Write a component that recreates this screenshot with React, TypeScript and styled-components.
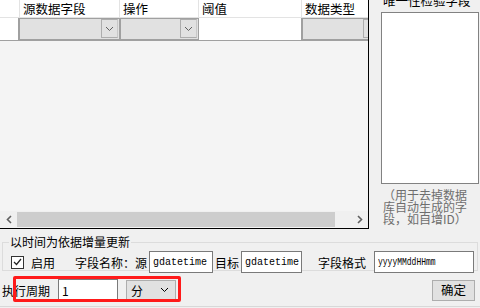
import React from 'react';
import styled, { createGlobalStyle } from 'styled-components';

const GlobalStyle = createGlobalStyle`
  html, body {
    margin: 0;
    padding: 0;
    background: #f0f0f0;
  }
  body {
    font-family: "Noto Sans CJK SC", "Microsoft YaHei", sans-serif;
    font-size: 12px;
    color: #000;
  }
`;

const Window = styled.div`
  width: 480px;
  height: 308px;
  overflow: hidden;
  display: flex;
  flex-direction: column;
  background: #f0f0f0;
`;

const Top = styled.div`
  display: flex;
  height: 229px;
`;

const GridPane = styled.div`
  width: 368px;
  border-right: 1px solid #000;
  border-bottom: 1px solid #000;
  background: #f4f4f4;
  display: flex;
  flex-direction: column;
  overflow: hidden;
`;

const Row = styled.div<{ $height: number }>`
  display: flex;
  height: ${({ $height }) => $height}px;
  flex-shrink: 0;
`;

const HeadCell = styled.div<{ $width: number }>`
  width: ${({ $width }) => $width}px;
  flex-shrink: 0;
  box-sizing: border-box;
  background: #fff;
  border-right: 1px solid #e3e3e3;
  border-bottom: 1px solid #e3e3e3;
  padding-left: 3px;
  font-size: 12.5px;
  line-height: 17px;
  white-space: nowrap;
`;

const RowHeader = styled.div`
  width: 19px;
  flex-shrink: 0;
  box-sizing: border-box;
  background: #fff;
  border-right: 1px solid #a0a0a0;
  border-bottom: 1px solid #a0a0a0;
`;

const ComboCell = styled.div<{ $width: number }>`
  width: ${({ $width }) => $width}px;
  flex-shrink: 0;
  box-sizing: border-box;
  background: #e1e1e1;
  border: 1px solid #a0a0a0;
  border-width: 1px 1px 2px 1px;
  display: flex;
  justify-content: flex-end;
  padding: 0 1px 1px 0;
`;

const DropButton = styled.div`
  width: 17px;
  box-sizing: border-box;
  border: 1px solid #adadad;
  border-right-color: #c8c8c8;
  display: flex;
  align-items: center;
  justify-content: center;
  color: #606060;
`;

const TextCell = styled.div<{ $width: number }>`
  width: ${({ $width }) => $width}px;
  flex-shrink: 0;
  box-sizing: border-box;
  background: #fff;
  border-bottom: 1px solid #a0a0a0;
  border-right: 1px solid #a0a0a0;
`;

const GridSpace = styled.div`
  flex: 1;
`;

const HScroll = styled.div`
  height: 16px;
  background: #f0f0f0;
  display: flex;
  align-items: center;
  margin-bottom: 1px;
`;

const ScrollArrow = styled.div`
  width: 17px;
  height: 16px;
  display: flex;
  align-items: center;
  justify-content: center;
  color: #606060;
`;

const ScrollThumb = styled.div`
  flex: 1;
  height: 15px;
  background: #cdcdcd;
  margin-right: 16px;
`;

const SidePane = styled.div`
  flex: 1;
  padding: 0 1px 0 12px;
  display: flex;
  flex-direction: column;
`;

const SideTitle = styled.div`
  margin-top: -6px;
  height: 18px;
  line-height: 14px;
  padding-left: 2px;
  font-size: 12.5px;
`;

const ListBox = styled.div`
  height: 172px;
  background: #fff;
  border: 1px solid #828282;
  box-sizing: border-box;
`;

const Hint = styled.div`
  width: 86px;
  margin-top: 5px;
  padding-left: 2px;
  color: #6e6e6e;
  font-size: 12px;
  line-height: 12px;
  font-family: "Noto Sans CJK SC", "DejaVu Sans", sans-serif;
`;

const Group = styled.fieldset`
  margin: 6px 2px 0 2px;
  padding: 2px 0 4px 0;
  height: 36px;
  box-sizing: border-box;
  border: 1px solid #dcdcdc;
  display: flex;
  align-items: center;
  font-size: 12px;
  legend {
    padding: 0 1px;
    margin-left: 6px;
    line-height: 14px;
    font-size: 12px;
  }
`;

const Check = styled.span`
  width: 11px;
  height: 11px;
  border: 1px solid #333;
  background: #fff;
  display: inline-flex;
  align-items: center;
  justify-content: center;
  margin: 0 7px 0 8px;
`;

const Label = styled.span<{ $ml?: number }>`
  margin-left: ${({ $ml }) => $ml ?? 0}px;
  white-space: nowrap;
`;

const Field = styled.div<{ $width: number; $mono?: boolean }>`
  width: ${({ $width }) => $width}px;
  height: 22px;
  box-sizing: border-box;
  background: #fff;
  border: 1px solid #7a7a7a;
  padding-left: 3px;
  display: flex;
  align-items: center;
  overflow: hidden;
  white-space: nowrap;
  font-family: ${({ $mono }) => ($mono ? '"Liberation Mono", monospace' : '"Noto Sans CJK SC", sans-serif')};
  font-size: ${({ $mono }) => ($mono ? '10px' : '12px')};
  margin: 0 2px;
  flex-shrink: 0;
`;

const Narrow = styled.span`
  display: inline-block;
  transform: scaleX(0.8);
  transform-origin: left center;
`;

const BottomRow = styled.div`
  display: flex;
  align-items: center;
  height: 30px;
  padding-left: 2px;
  margin-top: 4px;
  position: relative;
`;

const Highlight = styled.div`
  position: absolute;
  left: 13px;
  top: 1px;
  width: 168px;
  height: 26px;
  border: 3px solid #ff1a1a;
  border-radius: 2px;
  box-sizing: border-box;
  pointer-events: none;
`;

const Combo = styled.div`
  width: 50px;
  height: 20px;
  box-sizing: border-box;
  background: #e1e1e1;
  border: 1px solid #adadad;
  display: flex;
  align-items: center;
  justify-content: space-between;
  padding: 0 6px 0 4px;
  margin-left: 6px;
`;

const Button = styled.button`
  margin-left: auto;
  margin-right: 5px;
  width: 43px;
  height: 21px;
  background: #e1e1e1;
  border: 1px solid #adadad;
  font-family: "Noto Sans CJK SC", sans-serif;
  font-size: 12.5px;
  padding: 0;
  line-height: 18px;
`;

const BottomEdge = styled.div`
  flex: 1;
  border-top: 1px solid #d8d8d8;
  margin-top: 1px;
`;

const Chevron = () => (
  <svg width="9" height="6" viewBox="0 0 9 6">
    <path d="M1 1 L4.5 4.5 L8 1" fill="none" stroke="currentColor" strokeWidth="1" />
  </svg>
);

const Arrow = ({ dir }: { dir: 'left' | 'right' }) => (
  <svg width="6" height="9" viewBox="0 0 6 9">
    <path
      d={dir === 'left' ? 'M5 1 L1.5 4.5 L5 8' : 'M1 1 L4.5 4.5 L1 8'}
      fill="none"
      stroke="currentColor"
      strokeWidth="1.6"
    />
  </svg>
);

export default function App() {
  return (
    <Window>
      <GlobalStyle />
      <Top>
        <GridPane>
          <Row $height={18}>
            <HeadCell $width={20} />
            <HeadCell $width={100}>源数据字段</HeadCell>
            <HeadCell $width={79}>操作</HeadCell>
            <HeadCell $width={103}>阈值</HeadCell>
            <HeadCell $width={80}>数据类型</HeadCell>
          </Row>
          <Row $height={23}>
            <RowHeader />
            <ComboCell $width={101}>
              <DropButton>
                <Chevron />
              </DropButton>
            </ComboCell>
            <ComboCell $width={79}>
              <DropButton>
                <Chevron />
              </DropButton>
            </ComboCell>
            <TextCell $width={103} />
            <ComboCell $width={80}>
              <DropButton>
                <Chevron />
              </DropButton>
            </ComboCell>
          </Row>
          <GridSpace />
          <HScroll>
            <ScrollArrow>
              <Arrow dir="left" />
            </ScrollArrow>
            <ScrollThumb />
            <ScrollArrow>
              <Arrow dir="right" />
            </ScrollArrow>
          </HScroll>
        </GridPane>
        <SidePane>
          <SideTitle>唯一性检验字段</SideTitle>
          <ListBox />
          <Hint>（用于去掉数据库自动生成的字段，如自增ID）</Hint>
        </SidePane>
      </Top>
      <Group>
        <legend>以时间为依据增量更新</legend>
        <Check>
          <svg width="9" height="8" viewBox="0 0 9 8">
            <path d="M1 4 L3.5 6.5 L8 1" fill="none" stroke="#222" strokeWidth="1.2" />
          </svg>
        </Check>
        <Label>启用</Label>
        <Label $ml={20}>字段名称：源</Label>
        <Field $width={64} $mono>gdatetime</Field>
        <Label>目标</Label>
        <Field $width={61} $mono>gdatetime</Field>
        <Label $ml={14}>字段格式</Label>
        <Field $width={100} $mono style={{ marginLeft: 8 }}>
          <Narrow>yyyyMMddHHmm</Narrow>
        </Field>
      </Group>
      <BottomRow>
        <Label>执行周期</Label>
        <Field $width={60} style={{ marginLeft: 8 }}>1</Field>
        <Combo>
          <span>分</span>
          <Chevron />
        </Combo>
        <Highlight />
        <Button>确定</Button>
      </BottomRow>
      <BottomEdge />
    </Window>
  );
}
